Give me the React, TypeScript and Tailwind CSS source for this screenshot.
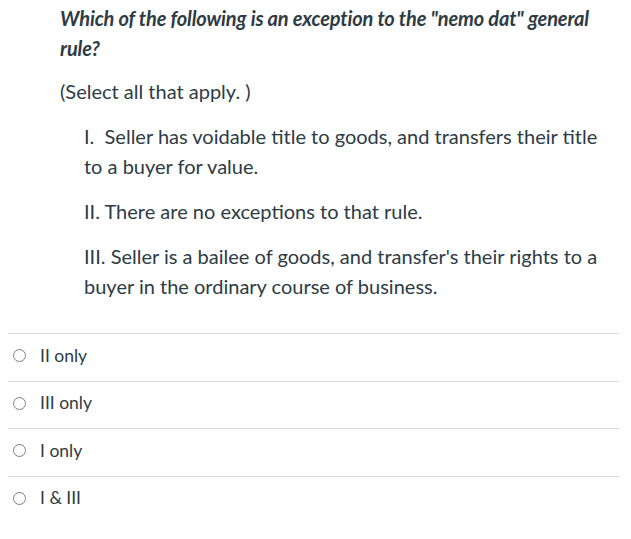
import React from 'react';

const options = ['II only', 'III only', 'I only', 'I & III'];

const App: React.FC = () => {
  return (
    <div className="min-h-screen bg-white text-[#2d3b45]" style={{ fontFamily: 'Lato, "Open Sans", sans-serif' }}>
      <div className="pl-[60px] pr-[20px] pt-[3px]">
        <p className="text-[20px] leading-[30px] font-bold italic tracking-[-0.15px]">
          Which of the following is an exception to the "nemo dat" general rule?
        </p>
        <p className="mt-[13px] text-[20px] leading-[30px]">(Select all that apply. )</p>
        <div className="pl-[24px] mt-[15px] text-[20px] leading-[30px]">
          <p>I.&nbsp; Seller has voidable title to goods, and transfers their title to a buyer for value.</p>
          <p className="mt-[15px]">II. There are no exceptions to that rule.</p>
          <p className="mt-[15px]">III. Seller is a bailee of goods, and transfer's their rights to a buyer in the ordinary course of business.</p>
        </div>
      </div>
      <div className="ml-[8px] mr-[12px] mt-[32px]">
        {options.map((o) => (
          <div key={o} className="border-t border-[#dcdcdc] h-[47.5px] flex items-center pl-[5px] pb-[3px]">
            <span className="w-[13px] h-[13px] rounded-full border border-[#808080] mr-[14px]" />
            <span className="text-[17.5px]">{o}</span>
          </div>
        ))}
      </div>
    </div>
  );
};

export default App;
